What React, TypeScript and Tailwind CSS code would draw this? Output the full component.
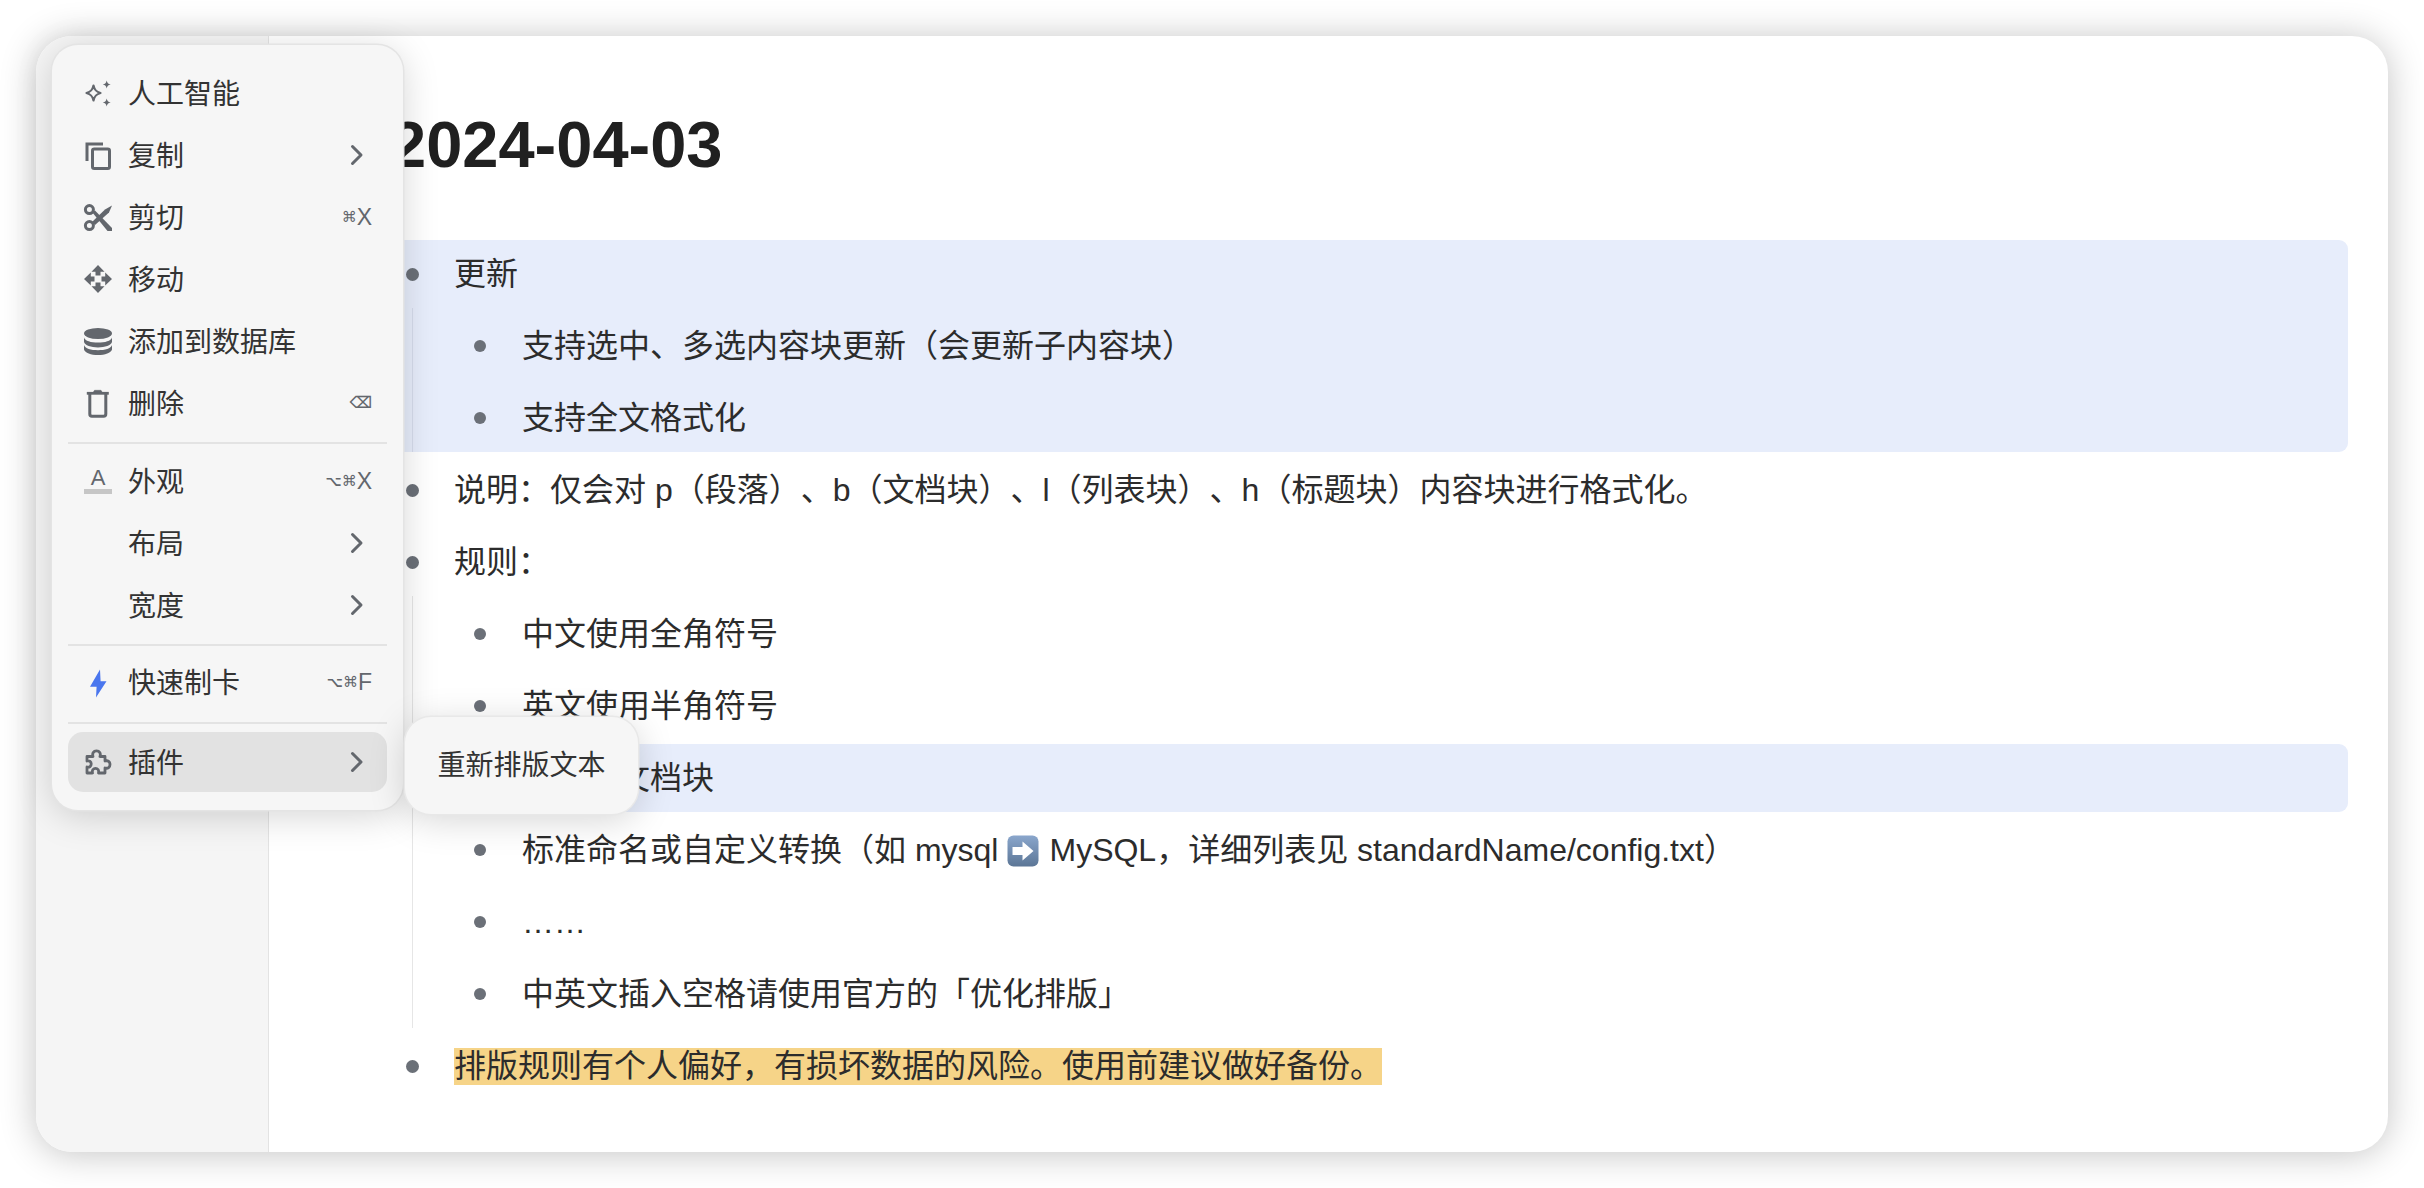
import React from "react";

const ICON = "block h-[28px] w-[28px] shrink-0 overflow-visible";

function Sparkle() {
  return (
    <svg viewBox="0 0 28 28" className={ICON}>
      <path d="M9.5 6.5 C10.5 11 12 12.7 16.5 14 C12 15.3 10.5 17 9.5 21.5 C8.5 17 7 15.3 2.5 14 C7 12.7 8.5 11 9.5 6.5 Z" fill="none" stroke="#63676d" strokeWidth="2.2" strokeLinejoin="round" />
      <path d="M22.7 1.5 C23.2 4 24 4.9 26.7 5.5 C24 6.1 23.2 7 22.7 9.5 C22.2 7 21.4 6.1 18.7 5.5 C21.4 4.9 22.2 4 22.7 1.5 Z" fill="#63676d" />
      <path d="M22.7 19.5 C23.2 22 24 22.9 26.7 23.5 C24 24.1 23.2 25 22.7 27.5 C22.2 25 21.4 24.1 18.7 23.5 C21.4 22.9 22.2 22 22.7 19.5 Z" fill="#63676d" />
    </svg>
  );
}
function Copy() {
  return (
    <svg viewBox="0 0 28 28" className={ICON} fill="none" stroke="#63676d" strokeWidth="3">
      <path d="M3 20 V3 H19" />
      <rect x="8.5" y="8" width="17" height="19.5" rx="1.8" />
    </svg>
  );
}
function Scissors() {
  return (
    <svg viewBox="0 0 28 28" className={ICON}>
      <circle cx="5.4" cy="6.6" r="4" fill="none" stroke="#63676d" strokeWidth="3" />
      <circle cx="5.4" cy="22.6" r="4" fill="none" stroke="#63676d" strokeWidth="3" />
      <path d="M8 9 L11 7.5 L28 25 V28 H23.5 Z" fill="#63676d" />
      <path d="M8 19 L21 6.5 L28 2.5 L25 9.5 L11 22 Z" fill="#63676d" />
    </svg>
  );
}
function Move() {
  return (
    <svg viewBox="0 0 28 28" className={ICON} fill="#63676d">
      <path d="M14 0 L20.5 6.8 L16.5 6.8 V10.5 H11.5 V6.8 L7.5 6.8 Z" />
      <path d="M14 28 L20.5 21.2 L16.5 21.2 V17.5 H11.5 V21.2 L7.5 21.2 Z" />
      <path d="M0 14 L6.8 7.5 L6.8 11.5 H10.5 V16.5 H6.8 L6.8 20.5 Z" />
      <path d="M28 14 L21.2 7.5 L21.2 11.5 H17.5 V16.5 H21.2 L21.2 20.5 Z" />
    </svg>
  );
}
function Database() {
  return (
    <svg viewBox="0 0 28 28" className={ICON} fill="#63676d">
      <ellipse cx="14" cy="6.5" rx="14" ry="5.5" />
      <path d="M0 10.5 C1 14 7 15.6 14 15.6 S27 14 28 10.5 V15 C27 18.5 21 20.4 14 20.4 S1 18.5 0 15 Z" />
      <path d="M0 18 C1 21.5 7 23.2 14 23.2 S27 21.5 28 18 V22.5 C27 26 21 28 14 28 S1 26 0 22.5 Z" />
    </svg>
  );
}
function Trash() {
  return (
    <svg viewBox="0 0 28 28" className={ICON} fill="none" stroke="#63676d">
      <path d="M2.8 4.3 H24.8" strokeWidth="2.8" />
      <path d="M9.5 3 L10.5 1.3 H17 L18 3 Z" fill="#63676d" strokeWidth="0.5" />
      <path d="M5.8 5 V25 Q5.8 27.3 8 27.3 H19.6 Q21.8 27.3 21.8 25 V5" strokeWidth="3" />
    </svg>
  );
}
function Bolt() {
  return (
    <svg viewBox="0 0 28 28" className={ICON} fill="#4a76ee">
      <path d="M16 1.5 L6 18.7 H12.6 L12 29.5 L22.5 13.2 H16.6 Z" />
    </svg>
  );
}
function Puzzle() {
  return (
    <svg viewBox="0 0 28 28" className={ICON} fill="none" stroke="#63676d" strokeWidth="2.8" strokeLinejoin="round">
      <path d="M3 8.5 H9 C8 5.5 9.5 2.8 12.5 2.8 C15.5 2.8 17 5.5 16 8.5 H21 V13 C24 12 26 14 26 16.5 C26 19 24 21 21 20 V25 H14.5 C15.2 22 13.5 20.3 11.5 20.3 C9.5 20.3 7.8 22 8.5 25 H3 V19 C5.5 19.8 7.2 18 7.2 16 C7.2 14 5.5 12.2 3 13 Z" />
    </svg>
  );
}
function Chevron() {
  return (
    <svg viewBox="0 0 14 22" className="mr-[8px] block h-[22px] w-[14px] shrink-0" fill="none" stroke="#63676d" strokeWidth="3" strokeLinecap="round" strokeLinejoin="round">
      <path d="M2.5 2.5 L11 11 L2.5 19.5" />
    </svg>
  );
}
function Arrow() {
  return (
    <svg viewBox="0 0 32 32" className="ml-[9px] mr-[10px] inline-block h-[32px] w-[32px] align-[-6px]">
      <defs>
        <linearGradient id="emoji" x1="0" y1="0" x2="0" y2="1">
          <stop offset="0" stopColor="#8aa6cc" />
          <stop offset="1" stopColor="#5c7696" />
        </linearGradient>
      </defs>
      <rect x="0.5" y="0.5" width="31" height="31" rx="6" fill="url(#emoji)" />
      <path d="M5.5 12 H15.5 V6.5 L26.5 16 L15.5 25.5 V20 H5.5 Z" fill="#ffffff" />
    </svg>
  );
}

function Keys({ alt, k }: { alt?: boolean; k: string }) {
  return (
    <span className="flex items-center text-[#63676d]">
      {alt && <span className="font-['DejaVu_Sans',sans-serif] text-[14px] font-bold leading-none">⌥</span>}
      <span className="font-['DejaVu_Sans',sans-serif] text-[15px] leading-none">⌘</span>
      <span className="text-[23px] leading-none">{k}</span>
    </span>
  );
}

function Item({ icon, label, right, active }: { icon?: React.ReactNode; label: string; right?: React.ReactNode; active?: boolean }) {
  return (
    <div className={active ? "flex h-[60px] items-center rounded-[15px] bg-[#e2e2e2] pl-[16px] pr-[15px]" : "flex h-[62px] items-center rounded-[15px] pl-[16px] pr-[15px]"}>
      <span className="flex h-[28px] w-[28px] shrink-0 items-center justify-center">{icon}</span>
      <span className="ml-[16px] flex-1 pt-[3px] text-[28px] leading-none text-[#333333]">{label}</span>
      {right}
    </div>
  );
}

function Dot({ sub }: { sub?: boolean }) {
  return <span className={sub ? "h-[12px] w-[12px] shrink-0 rounded-full bg-[#6b7078]" : "h-[13px] w-[13px] shrink-0 rounded-full bg-[#6b7078]"} />;
}

function Top({ children }: { children: React.ReactNode }) {
  return (
    <div className="flex h-[68px] items-center pl-[12px]">
      <Dot />
      <div className="ml-[35px]">{children}</div>
    </div>
  );
}
function Sub({ children, hl }: { children: React.ReactNode; hl?: boolean }) {
  return (
    <div className={hl ? "flex h-[68px] items-center rounded-[9px] bg-[#e7edfb] pl-[61px]" : "flex h-[68px] items-center pl-[61px]"}>
      <Dot sub />
      <div className="ml-[36px]">{children}</div>
    </div>
  );
}

export default function App() {
  return (
    <div className="relative h-[1188px] w-[2424px] overflow-hidden bg-white p-[36px] font-['Liberation_Sans','Noto_Sans_CJK_SC',sans-serif]">
      <div className="flex h-[1116px] w-[2352px] overflow-hidden rounded-[36px] bg-white shadow-[0_2px_36px_rgba(0,0,0,0.24)]">
        <aside className="w-[233px] shrink-0 border-r border-[#e3e3e3] bg-[#f5f5f5]" />
        <main className="flex-1 pl-[125px] pr-[40px] pt-[69px] text-[32px] leading-[46px] text-[#2c2c2c] [font-kerning:none] [text-spacing-trim:space-all]">
          <h1 className="-ml-[4px] mb-[55px] h-[80px] text-[65px] font-bold leading-[80px] text-[#202020]">2024-04-03</h1>
          <div className="flex flex-col gap-[4px]">
            <div className="rounded-[9px] bg-[#e7edfb]">
              <Top>更新</Top>
              <div className="ml-[18px] flex flex-col gap-[4px] border-l border-[#d5dcec] pt-[4px]">
                <Sub>支持选中、多选内容块更新（会更新子内容块）</Sub>
                <Sub>支持全文格式化</Sub>
              </div>
            </div>
            <Top>说明：仅会对 p（段落）、b（文档块）、l（列表块）、h（标题块）内容块进行格式化。</Top>
            <div>
              <Top>规则：</Top>
              <div className="ml-[18px] flex flex-col gap-[4px] border-l border-[#e6e6e6] pt-[4px]">
                <Sub>中文使用全角符号</Sub>
                <Sub>英文使用半角符号</Sub>
                <Sub hl>不处理文档块</Sub>
                <Sub>
                  标准命名或自定义转换（如 mysql<Arrow />MySQL，详细列表见 standardName/config.txt）
                </Sub>
                <Sub>……</Sub>
                <Sub>中英文插入空格请使用官方的「优化排版」</Sub>
              </div>
            </div>
            <Top>
              <span className="inline-block h-[37px] bg-[#f6d488] leading-[37px]">排版规则有个人偏好，有损坏数据的风险。使用前建议做好备份。</span>
            </Top>
          </div>
        </main>
      </div>

      {/* context menu */}
      <div className="absolute left-[52px] top-[45px] h-[765px] w-[351px] rounded-[26px] bg-[#f6f6f6] px-[16px] pb-[18px] pt-[17px] shadow-[0_0_0_1.5px_#e4e4e4,0_6px_36px_rgba(0,0,0,0.17)]">
        <Item icon={<Sparkle />} label="人工智能" />
        <Item icon={<Copy />} label="复制" right={<Chevron />} />
        <Item icon={<Scissors />} label="剪切" right={<Keys k="X" />} />
        <Item icon={<Move />} label="移动" />
        <Item icon={<Database />} label="添加到数据库" />
        <Item icon={<Trash />} label="删除" right={<span className="font-['DejaVu_Sans',sans-serif] text-[16px] font-bold leading-none text-[#63676d]">⌫</span>} />
        <div className="mb-[6px] mt-[8px] h-[2px] bg-[#e3e3e3]" />
        <Item
          icon={
            <span className="flex flex-col items-center">
              <span className="text-[22px] leading-[20px] text-[#63676d]">A</span>
              <span className="mt-[1px] h-[5px] w-[28px] bg-[#c6c6c6]" />
            </span>
          }
          label="外观"
          right={<Keys alt k="X" />}
        />
        <Item label="布局" right={<Chevron />} />
        <Item label="宽度" right={<Chevron />} />
        <div className="mb-[5px] mt-[8px] h-[2px] bg-[#e3e3e3]" />
        <Item icon={<Bolt />} label="快速制卡" right={<Keys alt k="F" />} />
        <div className="mb-[8px] mt-[9px] h-[2px] bg-[#e3e3e3]" />
        <Item active icon={<Puzzle />} label="插件" right={<Chevron />} />
      </div>

      {/* submenu */}
      <div className="absolute left-[405px] top-[717px] flex h-[97px] w-[233px] items-center justify-center rounded-[26px] bg-[#f6f6f6] shadow-[0_0_0_1.5px_#e8e8e8,0_6px_36px_rgba(0,0,0,0.17)]">
        <span className="text-[28px] leading-none text-[#333333]">重新排版文本</span>
      </div>
    </div>
  );
}
